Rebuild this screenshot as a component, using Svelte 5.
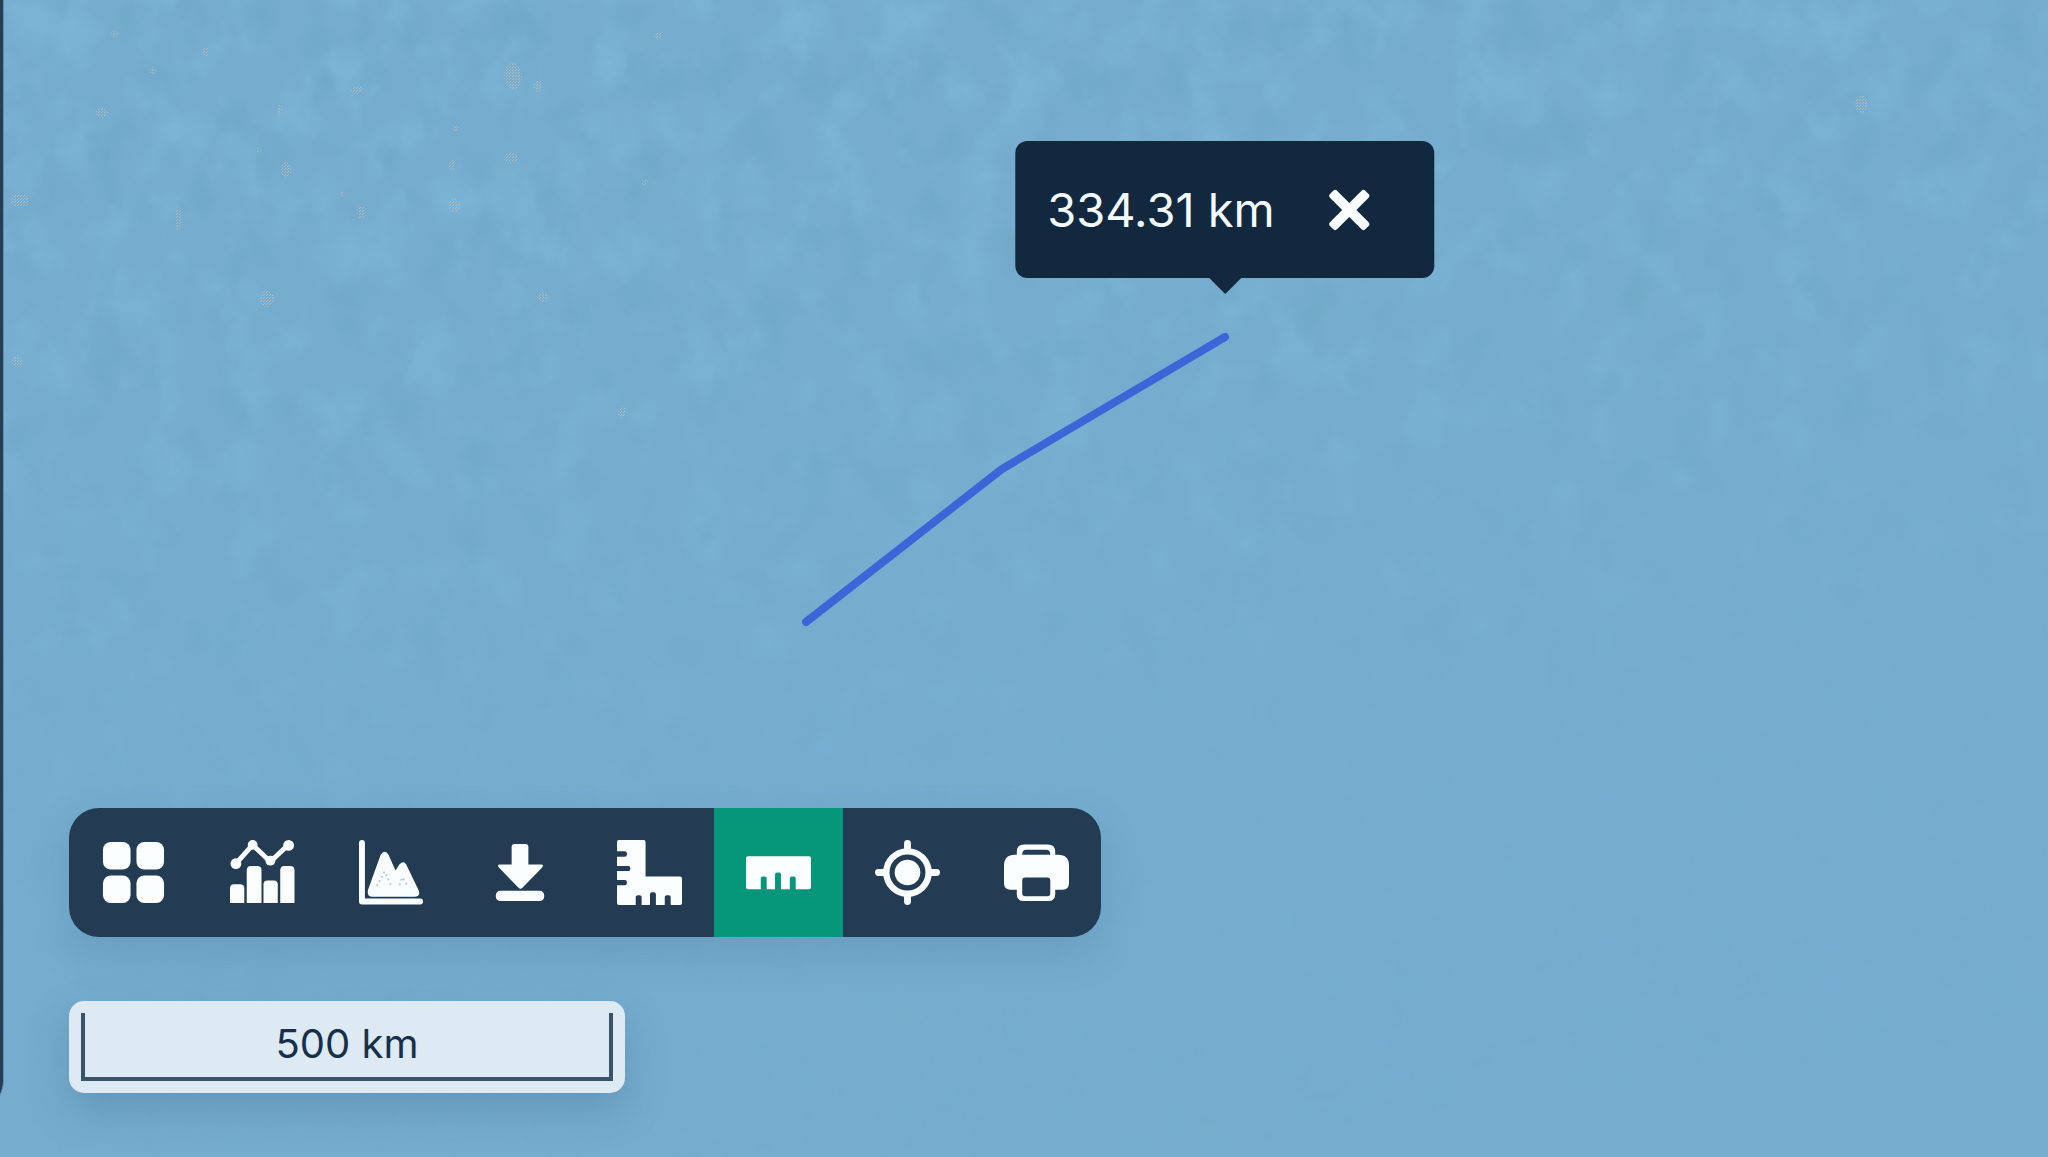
<script lang="ts">
  interface Tool {
    id: string;
    label: string;
  }

  const tools: Tool[] = [
    { id: "layers", label: "Layers" },
    { id: "statistics", label: "Statistics" },
    { id: "profile", label: "Elevation profile" },
    { id: "download", label: "Download" },
    { id: "area", label: "Measure area" },
    { id: "distance", label: "Measure distance" },
    { id: "locate", label: "Locate" },
    { id: "print", label: "Print" }
  ];

  // shallow spots on the sea floor: x, y, rx, ry
  const shoals = [
    [115, 34, 4, 3], [153, 71, 3, 4], [206, 52, 3, 5], [102, 113, 6, 5],
    [357, 90, 6, 4], [280, 109, 2, 6], [259, 150, 3, 2], [286, 170, 5, 8],
    [513, 76, 9, 13], [538, 86, 4, 6], [456, 128, 3, 3], [452, 165, 3, 6],
    [511, 158, 7, 5], [454, 205, 6, 7], [361, 212, 4, 7], [342, 194, 2, 2],
    [20, 201, 9, 7], [178, 219, 3, 12], [267, 299, 7, 8], [543, 297, 6, 5],
    [645, 182, 3, 3], [658, 36, 4, 4], [17, 361, 5, 6], [622, 412, 4, 6],
    [1861, 104, 7, 9]
  ];

  let activeTool = $state("distance");
  let measuring = $state(true);

  const distance = 334.31;
  const scaleLength = 500;
  const path = "806,622 1002,469 1225,337";
</script>

<main class="map">
  <svg class="terrain" aria-hidden="true">
    <defs>
      <filter id="relief" x="0" y="0" width="100%" height="100%" color-interpolation-filters="sRGB">
        <feTurbulence type="fractalNoise" baseFrequency="0.022 0.018" numOctaves="3" seed="8" />
        <feColorMatrix
          values="0 0 0 0 0.50
                  0 0 0 0 0.72
                  0 0 0 0 0.85
                  3 0 0 0 -1.35"
        />
      </filter>
      <filter id="troughs" x="0" y="0" width="100%" height="100%" color-interpolation-filters="sRGB">
        <feTurbulence type="fractalNoise" baseFrequency="0.024 0.018" numOctaves="3" seed="21" />
        <feColorMatrix
          values="0 0 0 0 0.43
                  0 0 0 0 0.65
                  0 0 0 0 0.77
                  3 0 0 0 -1.6"
        />
      </filter>
      <linearGradient id="fade" x1="0.35" y1="0" x2="0.6" y2="1">
        <stop offset="0" stop-color="#fff" stop-opacity="0.7" />
        <stop offset="0.35" stop-color="#fff" stop-opacity="0.4" />
        <stop offset="0.7" stop-color="#fff" stop-opacity="0.1" />
        <stop offset="1" stop-color="#fff" stop-opacity="0" />
      </linearGradient>
      <mask id="shelf">
        <rect width="100%" height="100%" fill="url(#fade)" />
      </mask>
      <pattern id="grain" width="3" height="3" patternUnits="userSpaceOnUse">
        <rect width="1" height="1" fill="#b9b9b5" />
        <rect x="2" y="1" width="1" height="1" fill="#b9b9b5" />
      </pattern>
    </defs>
    <g mask="url(#shelf)">
      <rect width="100%" height="100%" filter="url(#relief)" />
      <rect width="100%" height="100%" filter="url(#troughs)" />
    </g>
    {#each shoals as [x, y, rx, ry]}
      <ellipse cx={x} cy={y} {rx} {ry} fill="url(#grain)" />
    {/each}
  </svg>

  <div class="side-panel"></div>

  {#if measuring}
    <svg class="measure-line" aria-hidden="true">
      <polyline points={path} />
    </svg>
    <div class="measure-tooltip" role="status">
      <span>{distance} km</span>
      <button type="button" class="close-btn" aria-label="Clear measurement" onclick={() => (measuring = false)}>
        <svg viewBox="0 0 42 42">
          <rect x="-4" y="16" width="50" height="10" rx="3" transform="rotate(45 21 21)" />
          <rect x="-4" y="16" width="50" height="10" rx="3" transform="rotate(-45 21 21)" />
        </svg>
      </button>
    </div>
  {/if}

  <div class="controls">
    <div class="toolbar" role="toolbar" aria-label="Map tools">
      {#each tools as tool (tool.id)}
        <button
          type="button"
          class="tool"
          class:active={activeTool === tool.id}
          aria-label={tool.label}
          aria-pressed={activeTool === tool.id}
          onclick={() => (activeTool = tool.id)}
        >
          <svg viewBox="0 0 66 66" aria-hidden="true">
            {#if tool.id === "layers"}
              <rect x="2" y="2" width="28" height="28" rx="8" />
              <rect x="36" y="2" width="28" height="28" rx="8" />
              <rect x="2" y="36" width="28" height="28" rx="8" />
              <rect x="36" y="36" width="28" height="28" rx="8" />
            {:else if tool.id === "statistics"}
              <path d="M0 64V49q0-4 4-4h6.500q4 0 4 4V64z" />
              <path d="M17 64V31q0-4.500 4.500-4.500h6q4.500 0 4.500 4.500V64z" />
              <path d="M34 64V45q0-4 4-4h6.500q4 0 4 4V64z" />
              <path d="M51 64V31q0-4.500 4.500-4.500h5.500q4.500 0 4.500 4.500V64z" />
              <path class="stroke" stroke-width="5" d="M6 24L23 5L41 22L59 5" />
              <circle cx="6" cy="24" r="5.500" />
              <circle cx="23" cy="5" r="5" />
              <circle cx="41" cy="21" r="5" />
              <circle cx="59.500" cy="5.500" r="5.500" />
            {:else if tool.id === "profile"}
              <path class="stroke" stroke-width="6" d="M3 3V62.500H62" />
              <path d="M9 51L22 15q4-6 8 0l7 16l4-6q4-5 7 0L61 52q1 5.500-4 5.500H13q-5 0-4-6.500z" />
              <path class="ridge" d="M18 47L26 32L33 47M41 46L44 38L49 46" />
            {:else if tool.id === "download"}
              <path d="M24 7q0-3 3-3h11q3 0 3 3V25H54q3 0 1 3L35 48.500q-2 2-4 0L11 28q-2-3 1-3H24z" />
              <rect x="8" y="51.500" width="49" height="10.500" rx="4.500" />
            {:else if tool.id === "area"}
              <path
                d="M2 0H27q2 0 2 2V37H64q2 0 2 2V64q0 2-2 2H54.500V58q0-2-2-2h-2q-2 0-2 2v8H39.500V55q0-2-2-2h-2q-2 0-2 2V66H25V58q0-2-2-2h-2q-2 0-2 2v8H2q-2 0-2-2V46H8q2 0 2-2v-1.500q0-2-2-2H0V31.500H11.500q2 0 2-2v-1q0-2-2-2H0V17H8q2 0 2-2v-1.500q0-2-2-2H0V2q0-2 2-2z"
              />
            {:else if tool.id === "distance"}
              <path
                d="M2 16.500H64q2 0 2 2V48q0 2-2 2H50.500V39q0-2-2-2h-2q-2 0-2 2V50H35.500V35q0-2-2-2h-2q-2 0-2 2V50H21V39q0-2-2-2h-2q-2 0-2 2V50H2q-2 0-2-2V18.500q0-2 2-2z"
              />
            {:else if tool.id === "locate"}
              <circle cx="33" cy="33" r="13" />
              <circle class="stroke" stroke-width="6.500" cx="33" cy="33" r="21.500" />
              <path class="stroke" stroke-width="7" d="M33 3.500V10M33 56v6.500M3.500 33H10M56 33h6.500" />
            {:else}
              <path
                fill-rule="evenodd"
                d="M13 15V12q0-7.500 7.500-7.500H44.500q7.500 0 7.500 7.500V15h3q11 0 11 11V44q0 6.500-6.500 6.500H52V55q0 7-7 7H20q-7 0-7-7V50.500H6.500Q0 50.500 0 44V26Q0 15 11 15zM18.500 15H47q0-5-4-5H22.500q-4 0-4 5zM21.500 38q-3 0-3 3V54q0 3 3 3H44q3 0 3-3V41q0-3-3-3z"
              />
            {/if}
          </svg>
        </button>
      {/each}
    </div>

    <div class="scale">
      <div class="scale-line">{scaleLength} km</div>
    </div>
  </div>
</main>

<style>
:global(body) {
  margin: 0;
}

.map {
  position: relative;
  display: flex;
  flex-direction: column;
  justify-content: flex-end;
  min-height: 100vh;
  overflow: hidden;
  background: #76adcf;
  font-family: Inter, "Liberation Sans", sans-serif;
}

.terrain,
.measure-line {
  position: absolute;
  inset: 0;
  width: 100%;
  height: 100%;
}

.measure-line polyline {
  fill: none;
  stroke: #3c66d8;
  stroke-width: 8;
  stroke-linecap: round;
  stroke-linejoin: round;
}

/* edge of the collapsed side panel */
.side-panel {
  position: absolute;
  top: 0;
  bottom: 48px;
  left: -60px;
  width: 63px;
  border-right: 1px solid #5f8fae;
  border-radius: 0 0 28px 0;
  background: #253e56;
}

.measure-tooltip {
  position: absolute;
  top: 141px;
  left: 1225px;
  display: flex;
  align-items: center;
  gap: 54px;
  height: 137px;
  padding: 0 64px 0 32px;
  border-radius: 12px;
  background: #12283f;
  color: #f5fafd;
  font-size: 47px;
  white-space: nowrap;
  transform: translateX(-50%);
}

.measure-tooltip::after {
  content: "";
  position: absolute;
  top: 100%;
  left: 50%;
  border: 16px solid transparent;
  border-top-color: #12283f;
  border-bottom: 0;
  transform: translateX(-50%);
}

.close-btn {
  display: flex;
  padding: 0;
  border: 0;
  background: transparent;
  cursor: pointer;
}

.close-btn svg {
  width: 42px;
  height: 42px;
  fill: #fbfeff;
}

.controls {
  position: relative;
  display: flex;
  flex-direction: column;
  align-items: flex-start;
  gap: 64px;
  padding: 0 69px 64px;
}

.toolbar {
  display: flex;
  overflow: hidden;
  border-radius: 30px;
  background: #233c53;
  box-shadow: 0 16px 40px rgba(50, 95, 130, 0.2);
}

.tool {
  display: flex;
  align-items: center;
  justify-content: center;
  width: 129px;
  height: 129px;
  padding: 0;
  border: 0;
  background: transparent;
  cursor: pointer;
}

.tool.active {
  background: #06977a;
}

.tool svg {
  width: 65px;
  height: 65px;
  fill: #fbfeff;
}

.tool .stroke {
  fill: none;
  stroke: #fbfeff;
  stroke-linecap: round;
  stroke-linejoin: round;
}

.tool .ridge {
  fill: none;
  stroke: #b5cbdc;
  stroke-width: 2;
  stroke-dasharray: 2 3;
}

.scale {
  padding: 12px;
  border-radius: 15px;
  background: #dde9f3;
  box-shadow: 0 16px 40px rgba(50, 95, 130, 0.28);
}

.scale-line {
  width: 524px;
  height: 64px;
  border: 4px solid #38536a;
  border-top: 0;
  color: #16304a;
  font-size: 40px;
  line-height: 62px;
  text-align: center;
}
</style>
